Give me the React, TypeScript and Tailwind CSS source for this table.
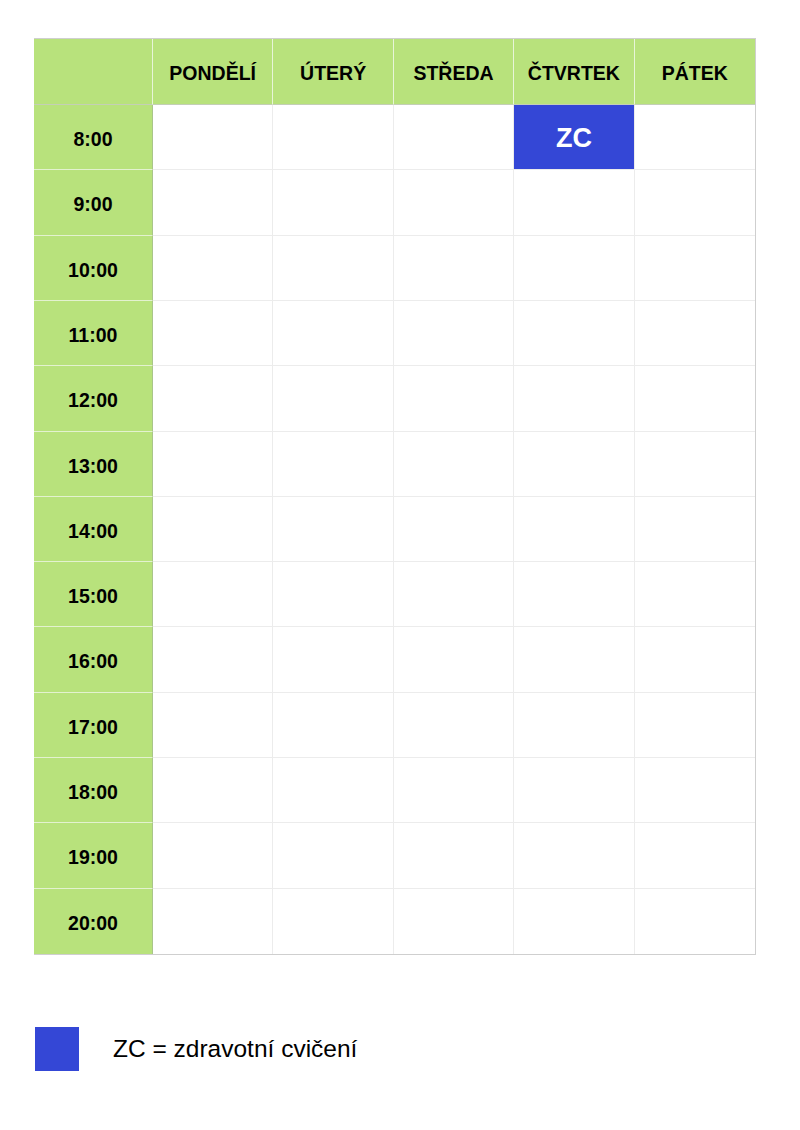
import React from "react";

const days = ["PONDĚLÍ", "ÚTERÝ", "STŘEDA", "ČTVRTEK", "PÁTEK"];
const times = ["8:00","9:00","10:00","11:00","12:00","13:00","14:00","15:00","16:00","17:00","18:00","19:00","20:00"];

export default function App() {
  return (
    <div className="w-[800px] h-[1130px] bg-white pt-[38px] pl-[34px]" style={{ fontFamily: '"Liberation Sans", Arial, sans-serif' }}>
      <div className="w-[722px] h-[917px] grid grid-cols-[119px_repeat(5,minmax(0,1fr))] grid-rows-[66px_repeat(13,minmax(0,1fr))] border-t border-r border-b border-[#cfcfcf]">
        <div className="bg-[#b8e27c] border-r border-r-[#e8f5d8] border-b border-b-[#c4cfb6]" />
        {days.map((d, i) => (
          <div
            key={d}
            className={`bg-[#b8e27c] flex items-center justify-center pt-[5px] text-[19.5px] font-bold text-black border-b border-b-[#c4cfb6] ${i < 4 ? "border-r border-r-[#e8f5d8]" : ""}`}
          >
            {d}
          </div>
        ))}
        {times.map((t, r) => (
          <React.Fragment key={t}>
            <div className={`bg-[#b8e27c] flex items-center justify-center pt-[5px] text-[19.5px] font-bold text-black border-r border-r-[#a9c58a] ${r < 12 ? "border-b border-b-[#e3f2cf]" : ""}`}>
              {t}
            </div>
            {days.map((d, c) => {
              const zc = r === 0 && c === 3;
              return (
                <div
                  key={d}
                  className={`${zc ? "bg-[#3447d6] text-white text-[27px] font-bold flex items-center justify-center pt-[3px]" : "bg-white"} ${c < 4 ? "border-r border-r-[#ececec]" : ""} ${r < 12 ? "border-b border-b-[#ececec]" : ""}`}
                >
                  {zc ? "ZC" : null}
                </div>
              );
            })}
          </React.Fragment>
        ))}
      </div>
      <div className="mt-[72px] flex items-center">
        <div className="w-[44px] h-[44px] bg-[#3447d6] ml-[1px]" />
        <div className="ml-[34px] text-[24.5px] text-black">ZC = zdravotní cvičení</div>
      </div>
    </div>
  );
}
